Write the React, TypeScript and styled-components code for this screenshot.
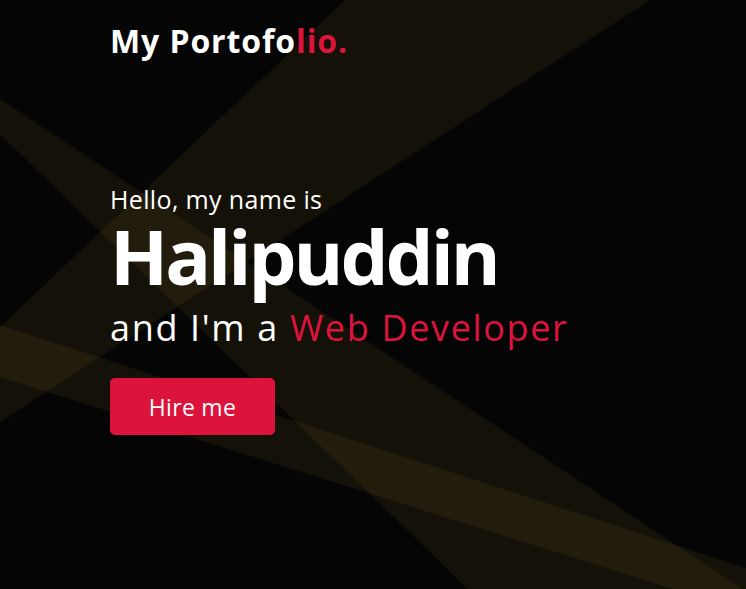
import styled, { createGlobalStyle } from "styled-components";

const GlobalStyle = createGlobalStyle`
  * {
    box-sizing: border-box;
  }

  body {
    margin: 0;
    background: #050505;
  }
`;

const Page = styled.div`
  position: relative;
  min-height: 100vh;
  overflow: hidden;
  background: #050505;
  font-family: "Open Sans", "Noto Sans", sans-serif;
  color: #fff;
`;

const Beams = styled.svg`
  position: absolute;
  inset: 0;
  width: 100%;
  height: 100%;
  z-index: 0;
`;

const Content = styled.div`
  position: relative;
  z-index: 1;
  padding: 0 110px;
`;

const Navbar = styled.nav`
  display: flex;
  align-items: center;
  padding-top: 23px;
`;

const Logo = styled.a`
  font-size: 32px;
  line-height: 36px;
  font-weight: 700;
  letter-spacing: 0.9px;
  color: #fff;
  text-decoration: none;

  span {
    color: crimson;
  }
`;

const Hero = styled.section`
  display: flex;
  flex-direction: column;
  align-items: flex-start;
  margin-top: 126px;
`;

const Greeting = styled.p`
  margin: 0;
  font-size: 25px;
  line-height: 28px;
  letter-spacing: 0.35px;
`;

const Name = styled.h1`
  margin: 1px 0 0;
  font-size: 76px;
  line-height: 84px;
  font-weight: 700;
  letter-spacing: -3px;
`;

const Role = styled.h2`
  margin: 10px 0 0;
  font-size: 36px;
  line-height: 40px;
  font-weight: 400;
  letter-spacing: 1.65px;

  span {
    color: crimson;
  }
`;

const HireButton = styled.a`
  display: flex;
  align-items: center;
  justify-content: center;
  margin-top: 30px;
  width: 165px;
  height: 57px;
  border-radius: 5px;
  background: crimson;
  color: #fff;
  font-size: 23px;
  letter-spacing: 0.3px;
  text-decoration: none;
`;

const beams = [
  "345,0 650,0 0,422 0,327",
  "0,99 746,591 746,640 520,640 0,134",
  "0,325 746,568 746,612 0,377",
];

const App = () => {
  return (
    <>
      <GlobalStyle />
      <Page>
        <Beams viewBox="0 0 746 589" preserveAspectRatio="none">
          {beams.map((points) => (
            <polygon
              key={points}
              points={points}
              fill="rgb(180, 140, 60)"
              fillOpacity={0.09}
            />
          ))}
        </Beams>
        <Content>
          <Navbar>
            <Logo href="#">
              My Portofo<span>lio.</span>
            </Logo>
          </Navbar>
          <Hero>
            <Greeting>Hello, my name is</Greeting>
            <Name>Halipuddin</Name>
            <Role>
              and I'm a <span>Web Developer</span>
            </Role>
            <HireButton href="#">Hire me</HireButton>
          </Hero>
        </Content>
      </Page>
    </>
  );
};

export default App;
